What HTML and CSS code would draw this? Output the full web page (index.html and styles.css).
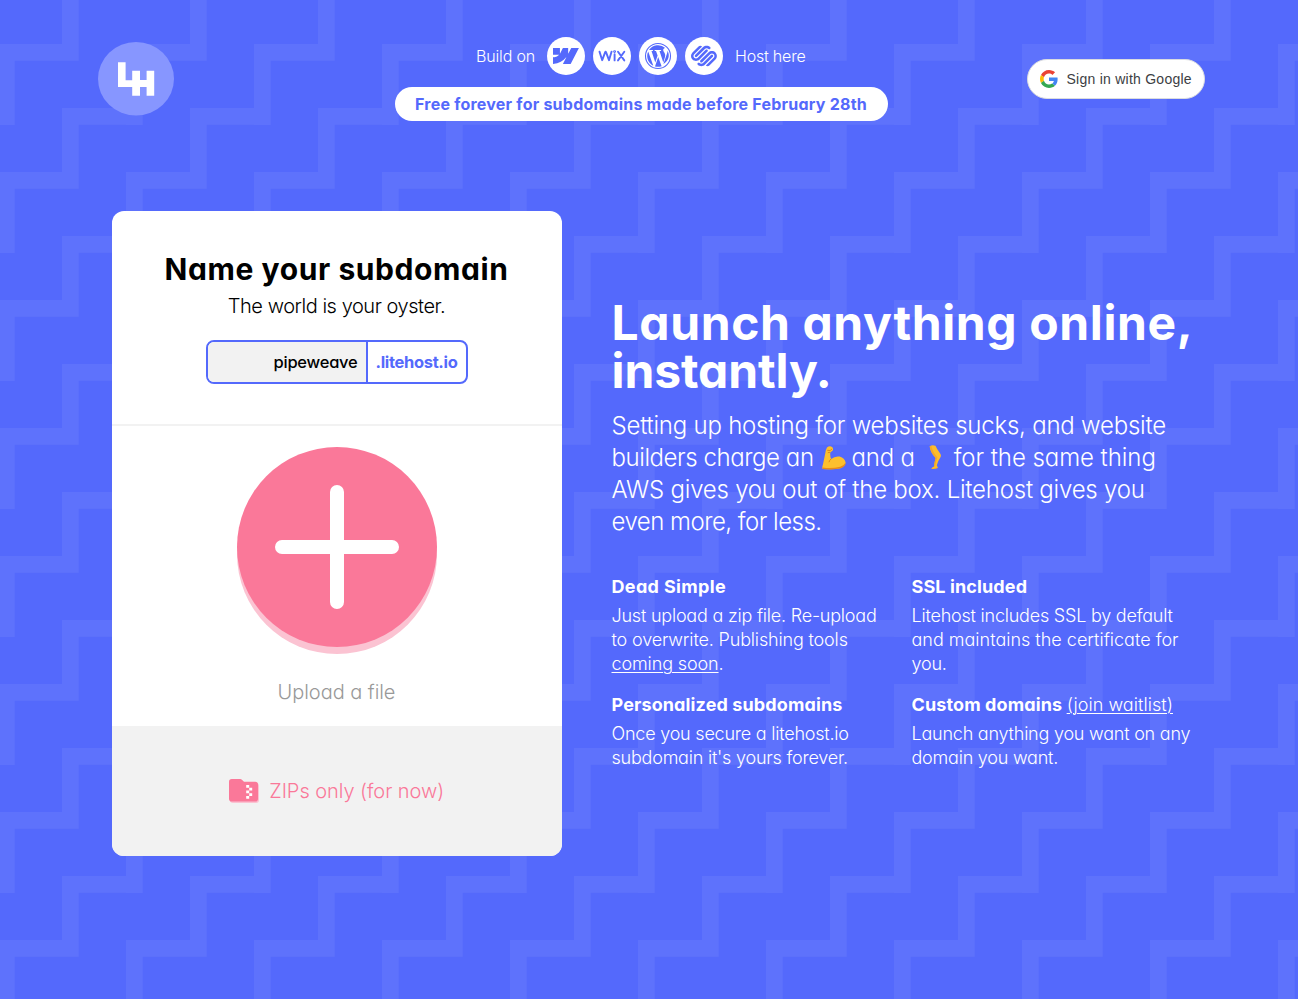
FILE: index.html
```
<!DOCTYPE html>
<html lang="en">
<head>
<meta charset="utf-8">
<title>Litehost</title>
<link rel="stylesheet" href="styles.css">
</head>
<body>
<header class="header">
  <a class="logo" aria-label="Litehost">
    <svg width="76" height="74" viewBox="0 0 76 74">
      <ellipse cx="38" cy="36.8" rx="38" ry="36.8" fill="#8796ff"/>
      <path d="M20 20.300h7.600v18h6.600v-9.600H42v9.200h6.600v-9.200h7.600v25h-7.600v-8.600H42v8.600h-7.800v-8.600H20z" fill="#fff"/>
    </svg>
  </a>
  <div class="intro">
    <div class="builders">
      <span class="build-on">Build on</span>
      <div class="platforms">
        <span class="platform"><svg width="38" height="38" viewBox="0 0 38 38"><path transform="translate(6 6) scale(1.08)" fill="#5469fc" d="m24 4.515-7.658 14.970H9.149l3.205-6.204h-.144C9.566 16.713 5.621 18.973 0 19.485v-6.118s3.596-.213 5.710-2.435H0V4.515h6.417v5.278l.144-.001 2.622-5.277h4.854v5.244h.144l2.720-5.244H24Z"/></svg></span>
        <span class="platform"><svg width="38" height="38" viewBox="0 0 38 38" fill="none" stroke="#5469fc" stroke-width="1.900" stroke-linecap="round" stroke-linejoin="round"><path d="M6.500 14.600l2.700 8.600 2.900-7.900q.5-1.100 1 0l2.900 7.900 2.600-8.600M21.600 17.300v6.100M25 14.700l6.300 8.700M31.300 14.700 25 23.400"/><circle cx="21.600" cy="14.600" r=".5"/></svg></span>
        <span class="platform"><svg width="38" height="38" viewBox="0 0 38 38"><circle cx="19" cy="19" r="12.500" fill="none" stroke="#5469fc" stroke-width="1.100"/><g transform="translate(7 7)" fill="#5469fc"><path d="M1.200 12c0 4.300 2.500 8 6.100 9.700L2.200 7.600A10.700 10.700 0 0 0 1.200 12zM19.200 11.500c0-1.300-.5-2.300-.9-3-.6-.9-1.100-1.700-1.100-2.600 0-1 .8-2 1.900-2h.1A10.800 10.800 0 0 0 3 6.100h.7c1.100 0 2.900-.1 2.900-.1.600 0 .7.800.1.900l-1.200.1 3.800 11.500 2.300-6.900L10 7l-1.100-.1c-.6 0-.5-.9.100-.9l2.800.1 2.900-.1c.6 0 .7.800.1.900l-1.300.1 3.800 11.400 1.100-3.500c.5-1.400.8-2.500.8-3.400zM12.200 13 9 22.400a10.900 10.900 0 0 0 6.600-.2zM21.500 6.800c0 1.100-.2 2.300-.8 3.800l-3.300 9.500c5.100-3 6.800-8.800 4.100-13.300z"/></g></svg></span>
        <span class="platform"><svg width="38" height="38" viewBox="0 0 38 38"><path transform="translate(6 6) scale(1.080)" fill="#5469fc" d="M22.655 8.719c-1.802-1.801-4.726-1.801-6.564 0l-7.351 7.350c-.45.45-.45 1.200 0 1.650.45.449 1.200.449 1.650 0l7.351-7.351c.899-.899 2.362-.899 3.264 0 .9.900.9 2.364 0 3.264l-7.239 7.239c.9.899 2.362.899 3.263 0l5.589-5.589c1.836-1.838 1.836-4.763.037-6.563zm-2.475 2.437c-.451-.45-1.201-.45-1.650 0l-7.354 7.389c-.9.899-2.361.899-3.262 0-.45-.45-1.200-.45-1.650 0-.45.45-.45 1.200 0 1.650 1.801 1.800 4.726 1.800 6.564 0l7.351-7.351c.449-.487.449-1.238.001-1.688zm-2.439-7.350c-1.801-1.801-4.726-1.801-6.564 0l-7.351 7.351c-.45.449-.45 1.199 0 1.649s1.200.45 1.650 0l7.395-7.351c.9-.899 2.371-.899 3.270 0 .451.45 1.201.45 1.650 0 .421-.487.421-1.199-.05-1.649zm-2.475 2.437c-.45-.45-1.200-.45-1.650 0l-7.351 7.389c-.899.900-2.363.900-3.265 0-.9-.899-.9-2.363 0-3.264l7.239-7.239c-.9-.9-2.362-.9-3.263 0L1.350 8.719c-1.800 1.800-1.800 4.725 0 6.563 1.801 1.801 4.725 1.801 6.564 0l7.351-7.351c.451-.488.451-1.238.001-1.688z"/></svg></span>
      </div>
      <span class="host-here">Host here</span>
    </div>
    <div class="banner">Free forever for subdomains made before February 28th</div>
  </div>
  <button class="google">
    <svg width="18" height="18" viewBox="0 0 48 48"><path fill="#EA4335" d="M24 9.500c3.540 0 6.710 1.220 9.210 3.600l6.850-6.850C35.900 2.380 30.470 0 24 0 14.620 0 6.510 5.380 2.560 13.220l7.980 6.190C12.430 13.720 17.740 9.500 24 9.500z"/><path fill="#4285F4" d="M46.980 24.550c0-1.570-.15-3.090-.38-4.550H24v9.020h12.940c-.58 2.960-2.260 5.480-4.780 7.180l7.730 6c4.510-4.180 7.090-10.360 7.090-17.650z"/><path fill="#FBBC05" d="M10.530 28.590c-.48-1.450-.76-2.990-.76-4.590s.27-3.140.76-4.590l-7.980-6.190C.92 16.460 0 20.120 0 24c0 3.880.92 7.540 2.560 10.780l7.970-6.190z"/><path fill="#34A853" d="M24 48c6.480 0 11.930-2.130 15.890-5.810l-7.730-6c-2.150 1.450-4.920 2.300-8.160 2.300-6.260 0-11.570-4.220-13.470-9.910l-7.980 6.190C6.510 42.620 14.620 48 24 48z"/></svg>
    <span>Sign in with Google</span>
  </button>
</header>
<main class="main">
  <section class="card">
    <div class="naming">
      <h2 class="card-title">Name your subdomain</h2>
      <p class="card-sub">The world is your oyster.</p>
      <div class="domain"><span class="name">pipeweave</span><span class="suffix">.litehost.io</span></div>
    </div>
    <div class="upload">
      <div class="plus"><svg width="124" height="124" viewBox="0 0 124 124"><path d="M62 7v110M7 62h110" stroke="#fff" stroke-width="14" stroke-linecap="round"/></svg></div>
      <p class="upload-label">Upload a file</p>
    </div>
    <div class="card-foot">
      <svg class="folder" width="30" height="24" viewBox="0 0 30 24"><path d="M3 1h9l3 3h12q3 0 3 3v14q0 3-3 3H4q-3 0-3-3z" fill="#fbc3d2"/><path d="M2.800 0h8.400q1 0 1.700.7L15 2.800h11.200q2.800 0 2.800 2.800v14.200q0 2.800-2.800 2.800H2.800Q0 22.600 0 19.800v-17Q0 0 2.800 0z" fill="#fa7899"/><path d="M17.200 6h3v2.700h-3zM20.200 8.700h3v2.800h-3zM17.200 11.500h3v2.700h-3zM20.200 14.200h3V17h-3zM17.200 17h3v2.700h-3z" fill="#fff"/></svg>
      <span>ZIPs only (for now)</span>
    </div>
  </section>
  <section class="pitch">
    <h1 class="headline"><span>Launch anything online,</span><br><span class="headline-end">instantly.</span></h1>
    <p class="lead">Setting up hosting for websites sucks, and website<br><span class="charge">builders charge an</span><svg class="arm" width="24" height="24" viewBox="0 0 25 25"><path d="M5.200 1.500Q8-.6 10.800 1.200q1.200 1.500.4 3.500L8.600 6.800q-.3 3.900.9 6.700 4.200-3.400 8.900-2.500 5.300 1.500 6.200 6.200-.2 3.800-5.300 5.900-7 1.900-18.600.8-.9-1.600.3-4.700Q3 10 4 4.500z" fill="#fdc02e"/><path d="M.7 22.500q9.500 1.400 18.300-.8 4.200-1.300 5.600-4.500-.2 4.300-5.300 6-7 1.900-18.600.7z" fill="#e88a1a"/><path d="M5.500 4.500l3 .2L10.500 3M8.500 6.500 6 7M9.500 13.500q-2 1.600-2.200 3.400" fill="none" stroke="#d98016" stroke-width=".9"/></svg><span class="and">and a</span><svg class="leg" width="13" height="25" viewBox="0 0 13 25"><path d="M.7 1.200Q3.500-.4 6.500.8 8 4.500 11 8.200q1.500 1.800.6 3.700-2.700 4-3.800 8.300l1.100 2.600q-3.600 1.700-6.600.9.500-1.500 2.700-2.300.5-4.600 1.700-8.500Q1.200 7.500.7 1.200z" fill="#fdbd2c"/><path d="M.7 1.300Q1.200 7.500 6.700 12.900q-1.300 4-1.700 8.500l1.200.2q.3-5.200 2.200-9.200Q3.500 7 2.300.8zM2.200 23.800q3 .9 6.600-.8l-.2-.8q-3 1.500-6.400 1.600z" fill="#f4a928"/></svg><span class="same">for the same thing</span><br>AWS gives you out of the box. Litehost gives you<br><span class="less">even more, for less.</span></p>
    <div class="features">
      <article><h3 class="ft-dead">Dead Simple</h3><p>Just upload a zip file. Re-upload<br><span class="publishing">to overwrite. Publishing tools</span><br><a>coming soon</a>.</p></article>
      <article><h3>SSL included</h3><p>Litehost includes SSL by default<br><span class="loose">and maintains the certificate for</span><br>you.</p></article>
      <article><h3>Personalized subdomains</h3><p>Once you secure a litehost.io<br>subdomain it's yours forever.</p></article>
      <article><h3>Custom domains <a class="wait">(join waitlist)</a></h3><p>Launch anything you want on any<br>domain you want.</p></article>
    </div>
  </section>
</main>
</body>
</html>
```
FILE: styles.css
```
* { box-sizing: border-box; }
body {
  margin: 0;
  height: 999px;
  overflow: hidden;
  color: #fff;
  font-family: Inter, sans-serif;
  font-weight: 300;
  font-feature-settings: "cv11";
  white-space: nowrap;
  background: #5469fc url("data:image/svg+xml,%3Csvg xmlns='http://www.w3.org/2000/svg' width='128' height='128'%3E%3Cpath fill='%235e72fc' d='M0 0h80.700v16.700h-64V81H0zM64 64h64v16.700H80.700V128H64zM0 64h16.700v16.700H0zM64 0h16.700v16.700H64z'/%3E%3C/svg%3E") -2px 44px;
}
h1, h2, h3, p { margin: 0; }

.header {
  display: flex;
  justify-content: space-between;
  align-items: flex-start;
  height: 211px;
  padding: 37px 93px 0 98px;
}
.logo { margin-top: 5px; height: 74px; }
.logo svg { display: block; }
.intro { display: flex; flex-direction: column; align-items: center; gap: 12px; margin-left: 81px; }
.builders { display: flex; align-items: center; gap: 12px; font-size: 16px; }
.build-on { width: 59px; letter-spacing: -.16px; }
.host-here { width: 71px; letter-spacing: -.2px; }
.platforms { display: flex; gap: 8px; }
.platform { width: 38px; height: 38px; border-radius: 50%; background: #fff; }
.platform svg { display: block; }
.banner {
  height: 34px;
  width: 493px;
  border-radius: 17px;
  background: #fff;
  color: #5469fc;
  font-size: 16px;
  font-weight: 700;
  line-height: 34px;
  text-align: center;
  letter-spacing: .23px;
}
.google {
  display: flex;
  align-items: center;
  gap: 8.5px;
  width: 178px;
  height: 40px;
  margin-top: 22px;
  padding: 0 12px;
  border: 1px solid #dadce0;
  border-radius: 20px;
  background: #fff;
  color: #3c4043;
  font: 14px "Liberation Sans", sans-serif;
  letter-spacing: .25px;
}

.main { display: flex; align-items: flex-start; gap: 50px; padding-left: 111.5px; }
.card {
  width: 450px;
  height: 645px;
  border-radius: 12px;
  background: #fff;
  color: #000;
  overflow: hidden;
  text-align: center;
}
.naming { height: 215px; padding-top: 38px; border-bottom: 2px solid #f2f2f2; }
.card-title { font-size: 30px; font-weight: 700; line-height: 40px; letter-spacing: .58px; }
.card-sub { margin-top: 3px; font-size: 20px; line-height: 28px; letter-spacing: -.46px; }
.domain {
  display: flex;
  width: 262px;
  height: 44px;
  margin: 20px auto 0;
  border: 2px solid #5469fc;
  border-radius: 8px;
  overflow: hidden;
  font-size: 16.5px;
  line-height: 40px;
}
.name { width: 160px; padding-right: 8px; background: #f2f2f2; border-right: 2px solid #5469fc; text-align: right; font-weight: 500; letter-spacing: -.24px; }
.suffix { padding-left: 8px; color: #5469fc; font-weight: 700; letter-spacing: -.33px; }
.upload { height: 300px; padding-top: 21px; }
.plus {
  display: grid;
  place-items: center;
  width: 200px;
  height: 200px;
  margin: 0 auto;
  border-radius: 50%;
  background: #fa7899;
  box-shadow: 0 7px 0 #fbc3d2;
}
.upload-label { margin-top: 30.5px; font-size: 20px; line-height: 28px; color: #999; letter-spacing: -.05px; }
.card-foot { display: flex; align-items: center; justify-content: center; gap: 10.5px; height: 130px; background: #f2f2f2; color: #fa7899; font-size: 20px; letter-spacing: -.05px; }

.pitch { padding-top: 88px; }
.headline { font-size: 48px; font-weight: 700; line-height: 48px; letter-spacing: .62px; }
.headline-end { letter-spacing: -.1px; }
.lead { margin-top: 15px; font-size: 24px; line-height: 32px; letter-spacing: -.22px; }
.charge { letter-spacing: -.43px; }
.arm { margin: 0 6px 0 8px; vertical-align: -4px; }
.leg { margin: 0 12px 0 14px; vertical-align: -4px; }
.same { letter-spacing: -.06px; }
.less { letter-spacing: -.51px; }
.features { display: grid; grid-template-columns: 1fr 1fr; width: 600px; margin-top: 36.5px; row-gap: 17px; font-size: 18px; line-height: 24px; }
.features h3 { font-size: 18px; font-weight: 700; line-height: 24px; letter-spacing: .12px; }
.features .ft-dead { letter-spacing: .35px; }
.features p { margin-top: 5px; letter-spacing: -.22px; }
.features a { text-decoration: underline; text-decoration-thickness: 1px; text-underline-offset: 2px; letter-spacing: -.12px; }
.features .wait { font-weight: 300; letter-spacing: .05px; }
.features .publishing { letter-spacing: -.16px; }
.loose { letter-spacing: 0; }
```
